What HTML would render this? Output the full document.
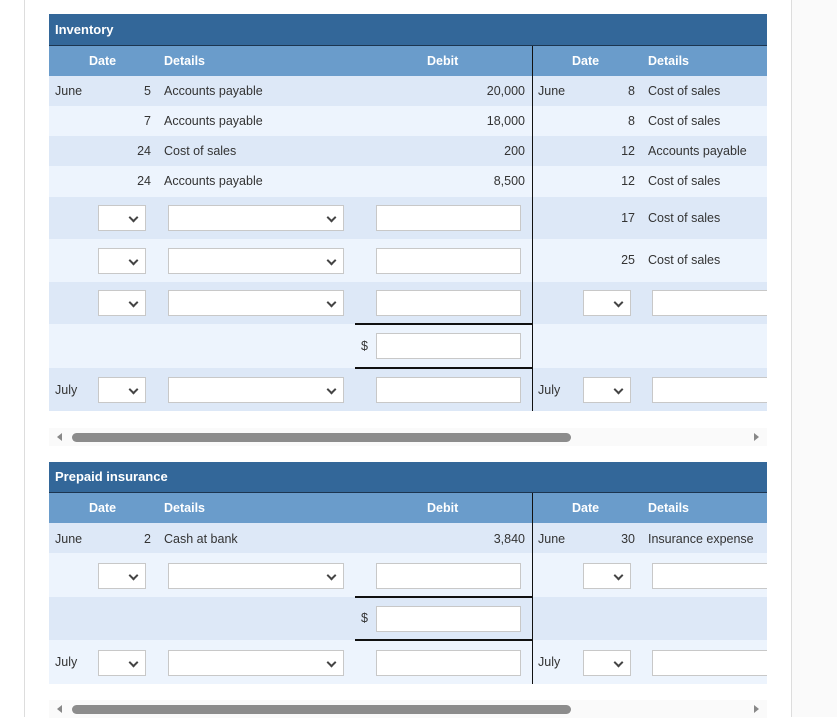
<!DOCTYPE html>
<html><head><meta charset="utf-8"><style>
*{margin:0;padding:0;box-sizing:border-box}
body{width:837px;height:717px;position:relative;background:#fff;font-family:"Liberation Sans",sans-serif;font-size:12.5px;color:#333;overflow:hidden}
.fr{position:absolute;left:24px;top:0;width:768px;height:717px;border-left:1px solid #ddd;border-right:1px solid #ddd}
.rg{position:absolute;left:792px;top:0;width:45px;height:717px;background:#fafafa}
.clip{position:absolute;left:49px;width:718px;overflow:hidden}
.a{position:absolute}
.title{background:#336799;color:#fff;font-weight:bold;font-size:13px;border-bottom:1px solid #1c3550}
.hd{background:#6a9ccb;color:#fff;font-weight:bold}
.A{background:#dde8f7}.B{background:#edf4fd}
.t{position:absolute;white-space:nowrap;line-height:14px}
.r{text-align:right}
.sel,.inp{position:absolute;background:#fff;border:1px solid #c8c8c8;height:26px}
.sel::after{content:"";position:absolute;right:8px;top:8px;width:5px;height:5px;border-right:2px solid #444;border-bottom:2px solid #444;transform:rotate(45deg)}
.vl{position:absolute;left:483px;width:1px;background:#111}
.hl{position:absolute;left:306px;width:177px;height:2px;background:#111}
.sb{position:absolute;left:49px;width:718px;height:18px;background:#fafafa}
.th{position:absolute;left:23px;top:5px;width:499px;height:9px;background:#8c8c8c;border-radius:5px}
.al{position:absolute;left:8px;top:5px;border-right:5px solid #888;border-top:4px solid transparent;border-bottom:4px solid transparent}
.ar{position:absolute;right:8px;top:5px;border-left:5px solid #888;border-top:4px solid transparent;border-bottom:4px solid transparent}
</style></head><body>
<div class="fr"></div><div class="rg"></div>

<div class="clip" style="top:14px;height:398px">
<div class="a title" style="left:0;top:0;width:718px;height:32px"><span class="t" style="left:6px;top:9px">Inventory</span></div>
<div class="a hd" style="left:0;top:32px;width:718px;height:30px">
<span class="t" style="left:40px;top:8px">Date</span><span class="t" style="left:115px;top:8px">Details</span><span class="t" style="left:378px;top:8px">Debit</span>
<span class="t" style="left:523px;top:8px">Date</span><span class="t" style="left:599px;top:8px">Details</span></div>
<div class="a A" style="left:0;top:62px;width:718px;height:30px"></div>
<div class="a B" style="left:0;top:92px;width:718px;height:30px"></div>
<div class="a A" style="left:0;top:122px;width:718px;height:30px"></div>
<div class="a B" style="left:0;top:152px;width:718px;height:31px"></div>
<div class="a A" style="left:0;top:183px;width:718px;height:42px"></div>
<div class="a B" style="left:0;top:225px;width:718px;height:43px"></div>
<div class="a A" style="left:0;top:268px;width:718px;height:42px"></div>
<div class="a B" style="left:0;top:310px;width:718px;height:44px"></div>
<div class="a A" style="left:0;top:354px;width:718px;height:43px"></div>

<span class="t" style="left:6px;top:70px">June</span><span class="t r" style="left:72px;width:30px;top:70px">5</span><span class="t" style="left:115px;top:70px">Accounts payable</span><span class="t r" style="left:400px;width:76px;top:70px">20,000</span><span class="t" style="left:489px;top:70px">June</span><span class="t r" style="left:556px;width:30px;top:70px">8</span><span class="t" style="left:599px;top:70px">Cost of sales</span>
<span class="t r" style="left:72px;width:30px;top:100px">7</span><span class="t" style="left:115px;top:100px">Accounts payable</span><span class="t r" style="left:400px;width:76px;top:100px">18,000</span><span class="t r" style="left:556px;width:30px;top:100px">8</span><span class="t" style="left:599px;top:100px">Cost of sales</span>
<span class="t r" style="left:72px;width:30px;top:130px">24</span><span class="t" style="left:115px;top:130px">Cost of sales</span><span class="t r" style="left:400px;width:76px;top:130px">200</span><span class="t r" style="left:556px;width:30px;top:130px">12</span><span class="t" style="left:599px;top:130px">Accounts payable</span>
<span class="t r" style="left:72px;width:30px;top:160px">24</span><span class="t" style="left:115px;top:160px">Accounts payable</span><span class="t r" style="left:400px;width:76px;top:160px">8,500</span><span class="t r" style="left:556px;width:30px;top:160px">12</span><span class="t" style="left:599px;top:160px">Cost of sales</span>

<div class="sel" style="left:49px;top:191px;width:48px"></div><div class="sel" style="left:119px;top:191px;width:176px"></div><div class="inp" style="left:327px;top:191px;width:145px"></div>
<span class="t r" style="left:556px;width:30px;top:197px">17</span><span class="t" style="left:599px;top:197px">Cost of sales</span>
<div class="sel" style="left:49px;top:234px;width:48px"></div><div class="sel" style="left:119px;top:234px;width:176px"></div><div class="inp" style="left:327px;top:234px;width:145px"></div>
<span class="t r" style="left:556px;width:30px;top:239px">25</span><span class="t" style="left:599px;top:239px">Cost of sales</span>
<div class="sel" style="left:49px;top:276px;width:48px"></div><div class="sel" style="left:119px;top:276px;width:176px"></div><div class="inp" style="left:327px;top:276px;width:145px"></div>
<div class="sel" style="left:534px;top:276px;width:48px"></div><div class="inp" style="left:603px;top:276px;width:200px"></div>
<div class="hl" style="top:309px"></div>
<span class="t" style="left:312px;top:325px">$</span><div class="inp" style="left:327px;top:319px;width:145px"></div>
<div class="hl" style="top:353px"></div>
<span class="t" style="left:6px;top:369px">July</span><div class="sel" style="left:49px;top:363px;width:48px"></div><div class="sel" style="left:119px;top:363px;width:176px"></div><div class="inp" style="left:327px;top:363px;width:145px"></div>
<span class="t" style="left:489px;top:369px">July</span><div class="sel" style="left:534px;top:363px;width:48px"></div><div class="inp" style="left:603px;top:363px;width:200px"></div>
<div class="vl" style="top:32px;height:365px"></div>
</div>
<div class="sb" style="top:428px"><div class="al"></div><div class="th"></div><div class="ar"></div></div>

<div class="clip" style="top:462px;height:222px">
<div class="a title" style="left:0;top:0;width:718px;height:31px"><span class="t" style="left:6px;top:8px">Prepaid insurance</span></div>
<div class="a hd" style="left:0;top:31px;width:718px;height:30px">
<span class="t" style="left:40px;top:8px">Date</span><span class="t" style="left:115px;top:8px">Details</span><span class="t" style="left:378px;top:8px">Debit</span>
<span class="t" style="left:523px;top:8px">Date</span><span class="t" style="left:599px;top:8px">Details</span></div>
<div class="a A" style="left:0;top:61px;width:718px;height:30px"></div>
<div class="a B" style="left:0;top:91px;width:718px;height:44px"></div>
<div class="a A" style="left:0;top:135px;width:718px;height:43px"></div>
<div class="a B" style="left:0;top:178px;width:718px;height:44px"></div>
<span class="t" style="left:6px;top:70px">June</span><span class="t r" style="left:72px;width:30px;top:70px">2</span><span class="t" style="left:115px;top:70px">Cash at bank</span><span class="t r" style="left:400px;width:76px;top:70px">3,840</span><span class="t" style="left:489px;top:70px">June</span><span class="t r" style="left:556px;width:30px;top:70px">30</span><span class="t" style="left:599px;top:70px">Insurance expense</span>
<div class="sel" style="left:49px;top:101px;width:48px"></div><div class="sel" style="left:119px;top:101px;width:176px"></div><div class="inp" style="left:327px;top:101px;width:145px"></div>
<div class="sel" style="left:534px;top:101px;width:48px"></div><div class="inp" style="left:603px;top:101px;width:200px"></div>
<div class="hl" style="top:134px"></div>
<span class="t" style="left:312px;top:149px">$</span><div class="inp" style="left:327px;top:144px;width:145px"></div>
<div class="hl" style="top:177px"></div>
<span class="t" style="left:6px;top:193px">July</span><div class="sel" style="left:49px;top:188px;width:48px"></div><div class="sel" style="left:119px;top:188px;width:176px"></div><div class="inp" style="left:327px;top:188px;width:145px"></div>
<span class="t" style="left:489px;top:193px">July</span><div class="sel" style="left:534px;top:188px;width:48px"></div><div class="inp" style="left:603px;top:188px;width:200px"></div>
<div class="vl" style="top:31px;height:191px"></div>
</div>
<div class="sb" style="top:700px"><div class="al"></div><div class="th"></div><div class="ar"></div></div>
</body></html>
